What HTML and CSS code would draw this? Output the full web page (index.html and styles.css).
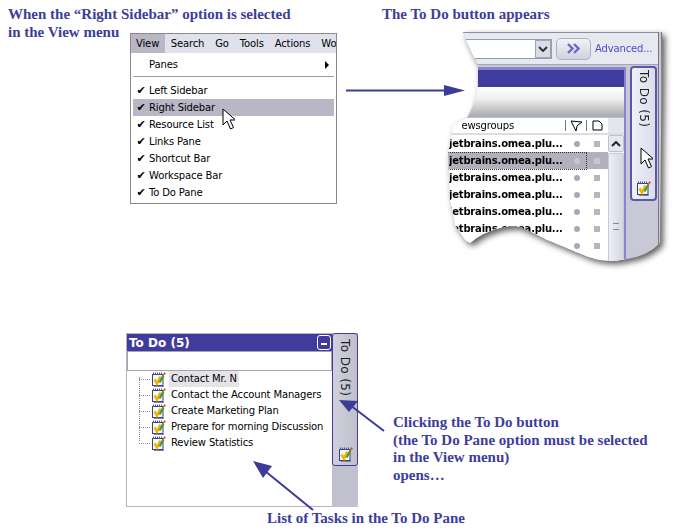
FILE: index.html
```html
<!DOCTYPE html>
<html lang="en">
<head>
  <meta charset="UTF-8">
  <title>To Do Pane</title>
  <link rel="stylesheet" href="styles.css">
</head>
<body>
<svg class="defs" width="0" height="0">
  <symbol id="task" viewBox="0 0 15 15">
    <rect x="1.500" y="2.500" width="10.500" height="11" fill="#f6f6fc" stroke="#2f4290"/>
    <path d="M2 1.500h10" stroke="#4a58a8" stroke-width="2" stroke-dasharray="1 1"/>
    <rect x="3" y="14" width="10" height="1" fill="#85858f"/>
    <path d="M3.500 7.500l2.500 4 3.500-7" fill="none" stroke="#f2b400" stroke-width="2.600"/>
    <path d="M8.500 10.500l4-7" stroke="#4a9a34" stroke-width="2.200"/>
    <path d="M11.500 3.500l2-3.500 1.500 2z" fill="#ec3c14"/>
  </symbol>
  <symbol id="cursor" viewBox="0 0 13 22">
    <path d="M1 1v16l4-4 3.500 8 3-1.500-3.500-7.500h5.500z" fill="#fff" stroke="#000"/>
  </symbol>
</svg>

<!-- captions -->
<p class="cap cap-menu">When the “Right Sidebar” option is selected<br>in the View menu</p>
<p class="cap cap-button">The To Do button appears</p>
<p class="cap cap-click">Clicking the To Do button<br>(the To Do Pane option must be selected<br>in the View menu)<br>opens…</p>
<p class="cap cap-list">List of Tasks in the To Do Pane</p>

<!-- view menu -->
<div class="menu">
  <div class="menu-bar">
    <span class="menu-title active">View</span>
    <span class="menu-title">Search</span>
    <span class="menu-title">Go</span>
    <span class="menu-title">Tools</span>
    <span class="menu-title">Actions</span>
    <span class="menu-title">Wo</span>
  </div>
  <div class="menu-list">
    <div class="menu-item"><span class="check"></span>Panes<span class="sub-arrow"></span></div>
    <div class="menu-sep"></div>
    <div class="menu-item"><span class="check">✔</span>Left Sidebar</div>
    <div class="menu-item hover"><span class="check">✔</span>Right Sidebar</div>
    <div class="menu-item"><span class="check">✔</span>Resource List</div>
    <div class="menu-item"><span class="check">✔</span>Links Pane</div>
    <div class="menu-item"><span class="check">✔</span>Shortcut Bar</div>
    <div class="menu-item"><span class="check">✔</span>Workspace Bar</div>
    <div class="menu-item"><span class="check">✔</span>To Do Pane</div>
  </div>
  <svg class="cursor menu-cursor"><use href="#cursor"/></svg>
</div>

<!-- torn piece of the main window -->
<div class="shot-wrap">
  <div class="shot">
    <div class="search-bar">
      <div class="combo"><span class="combo-btn"><svg width="10" height="6" viewBox="0 0 10 6"><path d="M1 1l4 4 4-4" fill="none" stroke="#333" stroke-width="2"/></svg></span></div>
      <div class="go-btn"><svg width="14" height="11" viewBox="0 0 14 11"><path d="M1 1l4.500 4.500-4.500 4.500M7 1l4.500 4.500-4.500 4.500" fill="none" stroke="#6a68c0" stroke-width="2.400"/></svg></div>
      <a class="advanced">Advanced...</a>
    </div>
    <div class="shot-body">
      <div class="pane">
        <div class="pane-title"></div>
        <div class="pane-band"></div>
        <div class="col-head">
          <span class="col-name">ewsgroups</span>
          <span class="col-icon"><svg width="13" height="12" viewBox="0 0 13 12"><path d="M1 1l11 1-4 3-1 1-1 5z" fill="#fff" stroke="#000"/></svg></span>
          <span class="col-icon"><svg width="11" height="11" viewBox="0 0 11 11"><path d="M1 1h6l3 3v6h-9z" fill="#fff" stroke="#000"/></svg></span>
          <span class="col-fill"></span>
        </div>
        <div class="list">
          <div class="rows">
            <div class="row"><b>jetbrains.omea.plu...</b><i class="dot"></i><i class="sq"></i></div>
            <div class="row sel"><b>jetbrains.omea.plu...</b><i class="dot"></i><i class="sq"></i></div>
            <div class="row"><b>jetbrains.omea.plu...</b><i class="dot"></i><i class="sq"></i></div>
            <div class="row"><b>jetbrains.omea.plu...</b><i class="dot"></i><i class="sq"></i></div>
            <div class="row"><b>jetbrains.omea.plu...</b><i class="dot"></i><i class="sq"></i></div>
            <div class="row"><b>jetbrains.omea.plu...</b><i class="dot"></i><i class="sq"></i></div>
            <div class="row"><b>jetbrains.omea.plu...</b><i class="dot"></i><i class="sq"></i></div>
          </div>
          <div class="scroll">
            <div class="scroll-up"><svg width="10" height="6" viewBox="0 0 10 6"><path d="M1 5l4-4 4 4" fill="none" stroke="#222" stroke-width="2"/></svg></div>
            <div class="scroll-thumb"><span></span></div>
          </div>
        </div>
      </div>
      <div class="gutter">
        <div class="todo-btn">
          <span class="todo-text">To Do (5)</span>
          <svg class="cursor todo-cursor"><use href="#cursor"/></svg>
          <svg class="task-icon"><use href="#task"/></svg>
        </div>
      </div>
    </div>
  </div>
</div>

<!-- to do pane -->
<div class="todo-pane">
  <div class="todo-main">
    <div class="todo-title"><span>To Do (5)</span><span class="collapse"></span></div>
    <div class="todo-search"></div>
    <ul class="tree">
      <li><svg class="task-icon"><use href="#task"/></svg><span class="task sel">Contact Mr. N</span></li>
      <li><svg class="task-icon"><use href="#task"/></svg><span class="task">Contact the Account Managers</span></li>
      <li><svg class="task-icon"><use href="#task"/></svg><span class="task">Create Marketing Plan</span></li>
      <li><svg class="task-icon"><use href="#task"/></svg><span class="task">Prepare for morning Discussion</span></li>
      <li><svg class="task-icon"><use href="#task"/></svg><span class="task">Review Statistics</span></li>
    </ul>
  </div>
  <div class="todo-strip">
    <div class="strip-btn">
      <span class="todo-text">To Do (5)</span>
      <svg class="task-icon"><use href="#task"/></svg>
    </div>
  </div>
</div>

<!-- arrows -->
<svg class="arrows" width="676" height="532" viewBox="0 0 676 532">
  <g fill="#3b3b98" stroke="#3b3b98">
    <path d="M346 90.500H448" stroke-width="2" fill="none"/>
    <path d="M444 85l21 5.500-21 5.500z" stroke="none"/>
    <path d="M384 431L350 405" stroke-width="2" fill="none"/>
    <path d="M339 400l19 1-9 11z" stroke="none"/>
    <path d="M313 510L265 471" stroke-width="2" fill="none"/>
    <path d="M253 461l19 5-9 12z" stroke="none"/>
  </g>
</svg>
</body>
</html>
```

FILE: styles.css
```css
html, body {
  margin: 0;
  height: 100%;
  background: #fff;
  overflow: hidden;
}

body {
  position: relative;
  font-family: "DejaVu Sans", sans-serif;
  font-size: 10px;
  letter-spacing: -0.14px;
  color: #000;
}

.defs {
  position: absolute;
}

/* captions */
.cap {
  position: absolute;
  margin: 0;
  font-family: "Liberation Serif", serif;
  font-weight: bold;
  font-size: 15px;
  letter-spacing: 0;
  line-height: 18px;
  color: #3d3d9a;
  white-space: nowrap;
}
.cap-menu { left: 8px; top: 5px; }
.cap-button { left: 382px; top: 5px; }
.cap-click { left: 393px; top: 414px; line-height: 17.7px; }
.cap-list { left: 267px; top: 509px; }

/* view menu */
.menu {
  position: absolute;
  left: 130px;
  top: 33px;
  width: 205px;
  height: 169px;
  border: 1px solid #8a8a8a;
  background: #fff;
  overflow: hidden;
}
.menu-bar {
  display: flex;
  height: 19px;
  align-items: center;
  background: #dfe2ec;
  white-space: nowrap;
}
.menu-title {
  padding: 0 5.5px;
  height: 19px;
  line-height: 19px;
}
.menu-title.active {
  background: #b9b6c6;
  padding: 0 6px 0 5px;
}
.menu-list {
  padding: 3px 2px 0;
}
.menu-item {
  display: flex;
  align-items: center;
  height: 17px;
  position: relative;
}
.menu-item.hover {
  background: #b9b6c6;
}
.check {
  width: 16px;
  text-align: center;
  font-size: 11px;
  flex: none;
}
.sub-arrow {
  margin-left: auto;
  margin-right: 5px;
  border-left: 4px solid #000;
  border-top: 4px solid transparent;
  border-bottom: 4px solid transparent;
}
.menu-sep {
  height: 1px;
  margin: 3px 0 5px;
  background: #9c9c9c;
}
.cursor {
  position: absolute;
  width: 13px;
  height: 22px;
}
.menu-cursor {
  left: 91px;
  top: 74px;
}

/* torn window */
.shot-wrap {
  position: absolute;
  left: 448px;
  top: 32px;
  width: 216px;
  height: 232px;
  filter: drop-shadow(3px 3px 3px rgba(0, 0, 0, 0.65));
}
.shot {
  width: 210px;
  height: 232px;
  box-sizing: content-box;
  border-right: 4px double #77778a;
  background: #c8c8d6;
  clip-path: path("M15 0 L18 8 Q24 22 30 33 L30 53 Q28 70 19 86 Q8 90 5 93 L0 123 L2 168 L7 193 L17 208 L22 211 Q35 200 52 196 Q65 193 72 195 Q90 203 99 208 C125 218 140 226 152 228 Q165 230 179 227 Q200 224 212 211 L214 0 Z");
}
.search-bar {
  display: flex;
  align-items: center;
  gap: 4px;
  height: 31px;
  border-top: 1px solid #8f8f9c;
  border-bottom: 1px solid #a5a5b0;
  background: #e8e8f1;
}
.combo {
  display: flex;
  justify-content: flex-end;
  width: 102px;
  height: 18px;
  border: 1px solid #8ba0b5;
  background: #fff;
}
.combo-btn {
  display: flex;
  align-items: center;
  justify-content: center;
  width: 16px;
  background: #d9dbe6;
  border: 1px solid #9aa8b8;
  box-sizing: border-box;
}
.go-btn {
  display: flex;
  align-items: center;
  justify-content: center;
  width: 33px;
  height: 20px;
  border: 1px solid #b0b0c0;
  border-radius: 5px;
  background: linear-gradient(#f2f2f8, #d2d2e0);
}
.advanced {
  color: #4a4ac8;
  white-space: nowrap;
}
.shot-body {
  display: flex;
  height: 199px;
}
.pane {
  width: 176px;
  margin-top: 2px;
  border-top: 3px solid #8785cc;
  border-right: 2px solid #8785cc;
  background: #fff;
  flex: none;
}
.pane-title {
  height: 17px;
  background: #3f3c9e;
}
.pane-band {
  height: 30px;
  background: linear-gradient(#fff, #eee 40%, #a9a9ae);
}
.col-head {
  display: flex;
  align-items: center;
  height: 18px;
  border-top: 1px solid #a9c3d8;
  border-bottom: 2px solid #dcdce6;
  box-sizing: border-box;
  overflow: hidden;
}
.col-name {
  width: 117px;
  padding-right: 51px;
  box-sizing: border-box;
  text-align: right;
  flex: none;
}
.col-icon {
  display: flex;
  align-items: center;
  justify-content: center;
  width: 21px;
  height: 11px;
  border-left: 1px solid #777;
  box-sizing: border-box;
  flex: none;
}
.col-fill {
  flex: 1;
  align-self: stretch;
  margin-left: 1px;
  background: #e4e8ea;
}
.list {
  display: flex;
}
.rows {
  width: 160px;
  flex: none;
}
.row {
  position: relative;
  display: flex;
  align-items: center;
  height: 17px;
  padding-left: 1px;
  white-space: nowrap;
}
.row b {
  width: 121px;
  overflow: hidden;
  letter-spacing: -0.2px;
  flex: none;
}
.row.sel {
  background: #b0b1bd;
}
.row.sel::after {
  content: "";
  position: absolute;
  left: 0;
  top: 0;
  width: 138px;
  height: 16px;
  border: 1px dotted #333;
  border-left: 0;
}
.dot {
  width: 6px;
  height: 6px;
  border-radius: 50%;
  margin-left: 4px;
  background: #a8a8bc;
  flex: none;
}
.sq {
  width: 6px;
  height: 6px;
  margin-left: 14px;
  background: #b6b6c2;
  flex: none;
}
.row.sel .dot,
.row.sel .sq {
  background: #c6c6d0;
}
.scroll {
  width: 16px;
  background: #f4f4f8;
}
.scroll-up {
  display: flex;
  align-items: center;
  justify-content: center;
  height: 17px;
  border: 1px solid #c0c0d0;
  border-radius: 2px;
  background: #e6e6f0;
  box-sizing: border-box;
}
.scroll-thumb {
  display: flex;
  align-items: center;
  justify-content: center;
  height: 144px;
  margin-top: 1px;
  border: 1px solid #c8c8d8;
  border-radius: 2px;
  background: linear-gradient(90deg, #eeeef6, #d6d6e4);
}
.scroll-thumb span {
  width: 6px;
  height: 5px;
  border-top: 1px solid #888;
  border-bottom: 1px solid #888;
}
.gutter {
  flex: 1;
  padding: 1px 1px 0 4px;
}
.todo-btn,
.strip-btn {
  display: flex;
  flex-direction: column;
  align-items: center;
  box-sizing: border-box;
  position: relative;
}
.todo-btn {
  height: 135px;
  padding-top: 2px;
  border: 2px solid #5a58ac;
  border-radius: 4px;
  background: linear-gradient(90deg, #f0f0f8, #dcdcec);
}
.todo-text {
  writing-mode: vertical-rl;
  font-size: 12px;
  letter-spacing: 0.4px;
  color: #222;
  white-space: nowrap;
}
.todo-cursor {
  left: 8px;
  top: 79px;
}
.task-icon {
  width: 15px;
  height: 15px;
  flex: none;
}
.todo-btn .task-icon {
  position: absolute;
  left: 4px;
  top: 113px;
}

/* to do pane */
.todo-pane {
  position: absolute;
  left: 126px;
  top: 333px;
  display: flex;
  height: 174px;
}
.todo-main {
  width: 205px;
  border: 1px solid #b4b4c4;
  border-right: 0;
  background: #fff;
}
.todo-title {
  display: flex;
  align-items: center;
  justify-content: space-between;
  height: 17px;
  padding: 0 1px 0 2px;
  background: #3f3c9e;
  color: #fff;
  font-size: 12px;
  font-weight: bold;
  letter-spacing: 0;
}
.collapse {
  position: relative;
  width: 12px;
  height: 13px;
  border: 1px solid #fff;
  border-radius: 3px;
}
.collapse::after {
  content: "";
  position: absolute;
  left: 3px;
  top: 7px;
  width: 6px;
  height: 2px;
  background: #fff;
}
.todo-search {
  height: 18px;
  border: 1px solid #a4a4b0;
}
.tree {
  position: relative;
  list-style: none;
  margin: 0;
  padding: 0 0 0 24px;
}
.tree::before {
  content: "";
  position: absolute;
  left: 12px;
  top: 6px;
  height: 64px;
  border-left: 1px dotted #8a8a8a;
}
.tree li {
  position: relative;
  display: flex;
  align-items: center;
  gap: 3px;
  height: 16px;
}
.tree li::before {
  content: "";
  position: absolute;
  left: -12px;
  top: 8px;
  width: 11px;
  border-top: 1px dotted #8a8a8a;
}
.task {
  padding: 0 2px;
  line-height: 16px;
  white-space: nowrap;
}
.task.sel {
  background: #e3e3e8;
}
.todo-strip {
  width: 26px;
  background: #c0c0ce;
}
.strip-btn {
  height: 133px;
  padding-top: 5px;
  justify-content: space-between;
  padding-bottom: 3px;
  border: 1px solid #3f3c9e;
  border-radius: 3px;
  background: linear-gradient(90deg, #cfd0dc, #bfc0cc);
}

.arrows {
  position: absolute;
  left: 0;
  top: 0;
  pointer-events: none;
}
```
